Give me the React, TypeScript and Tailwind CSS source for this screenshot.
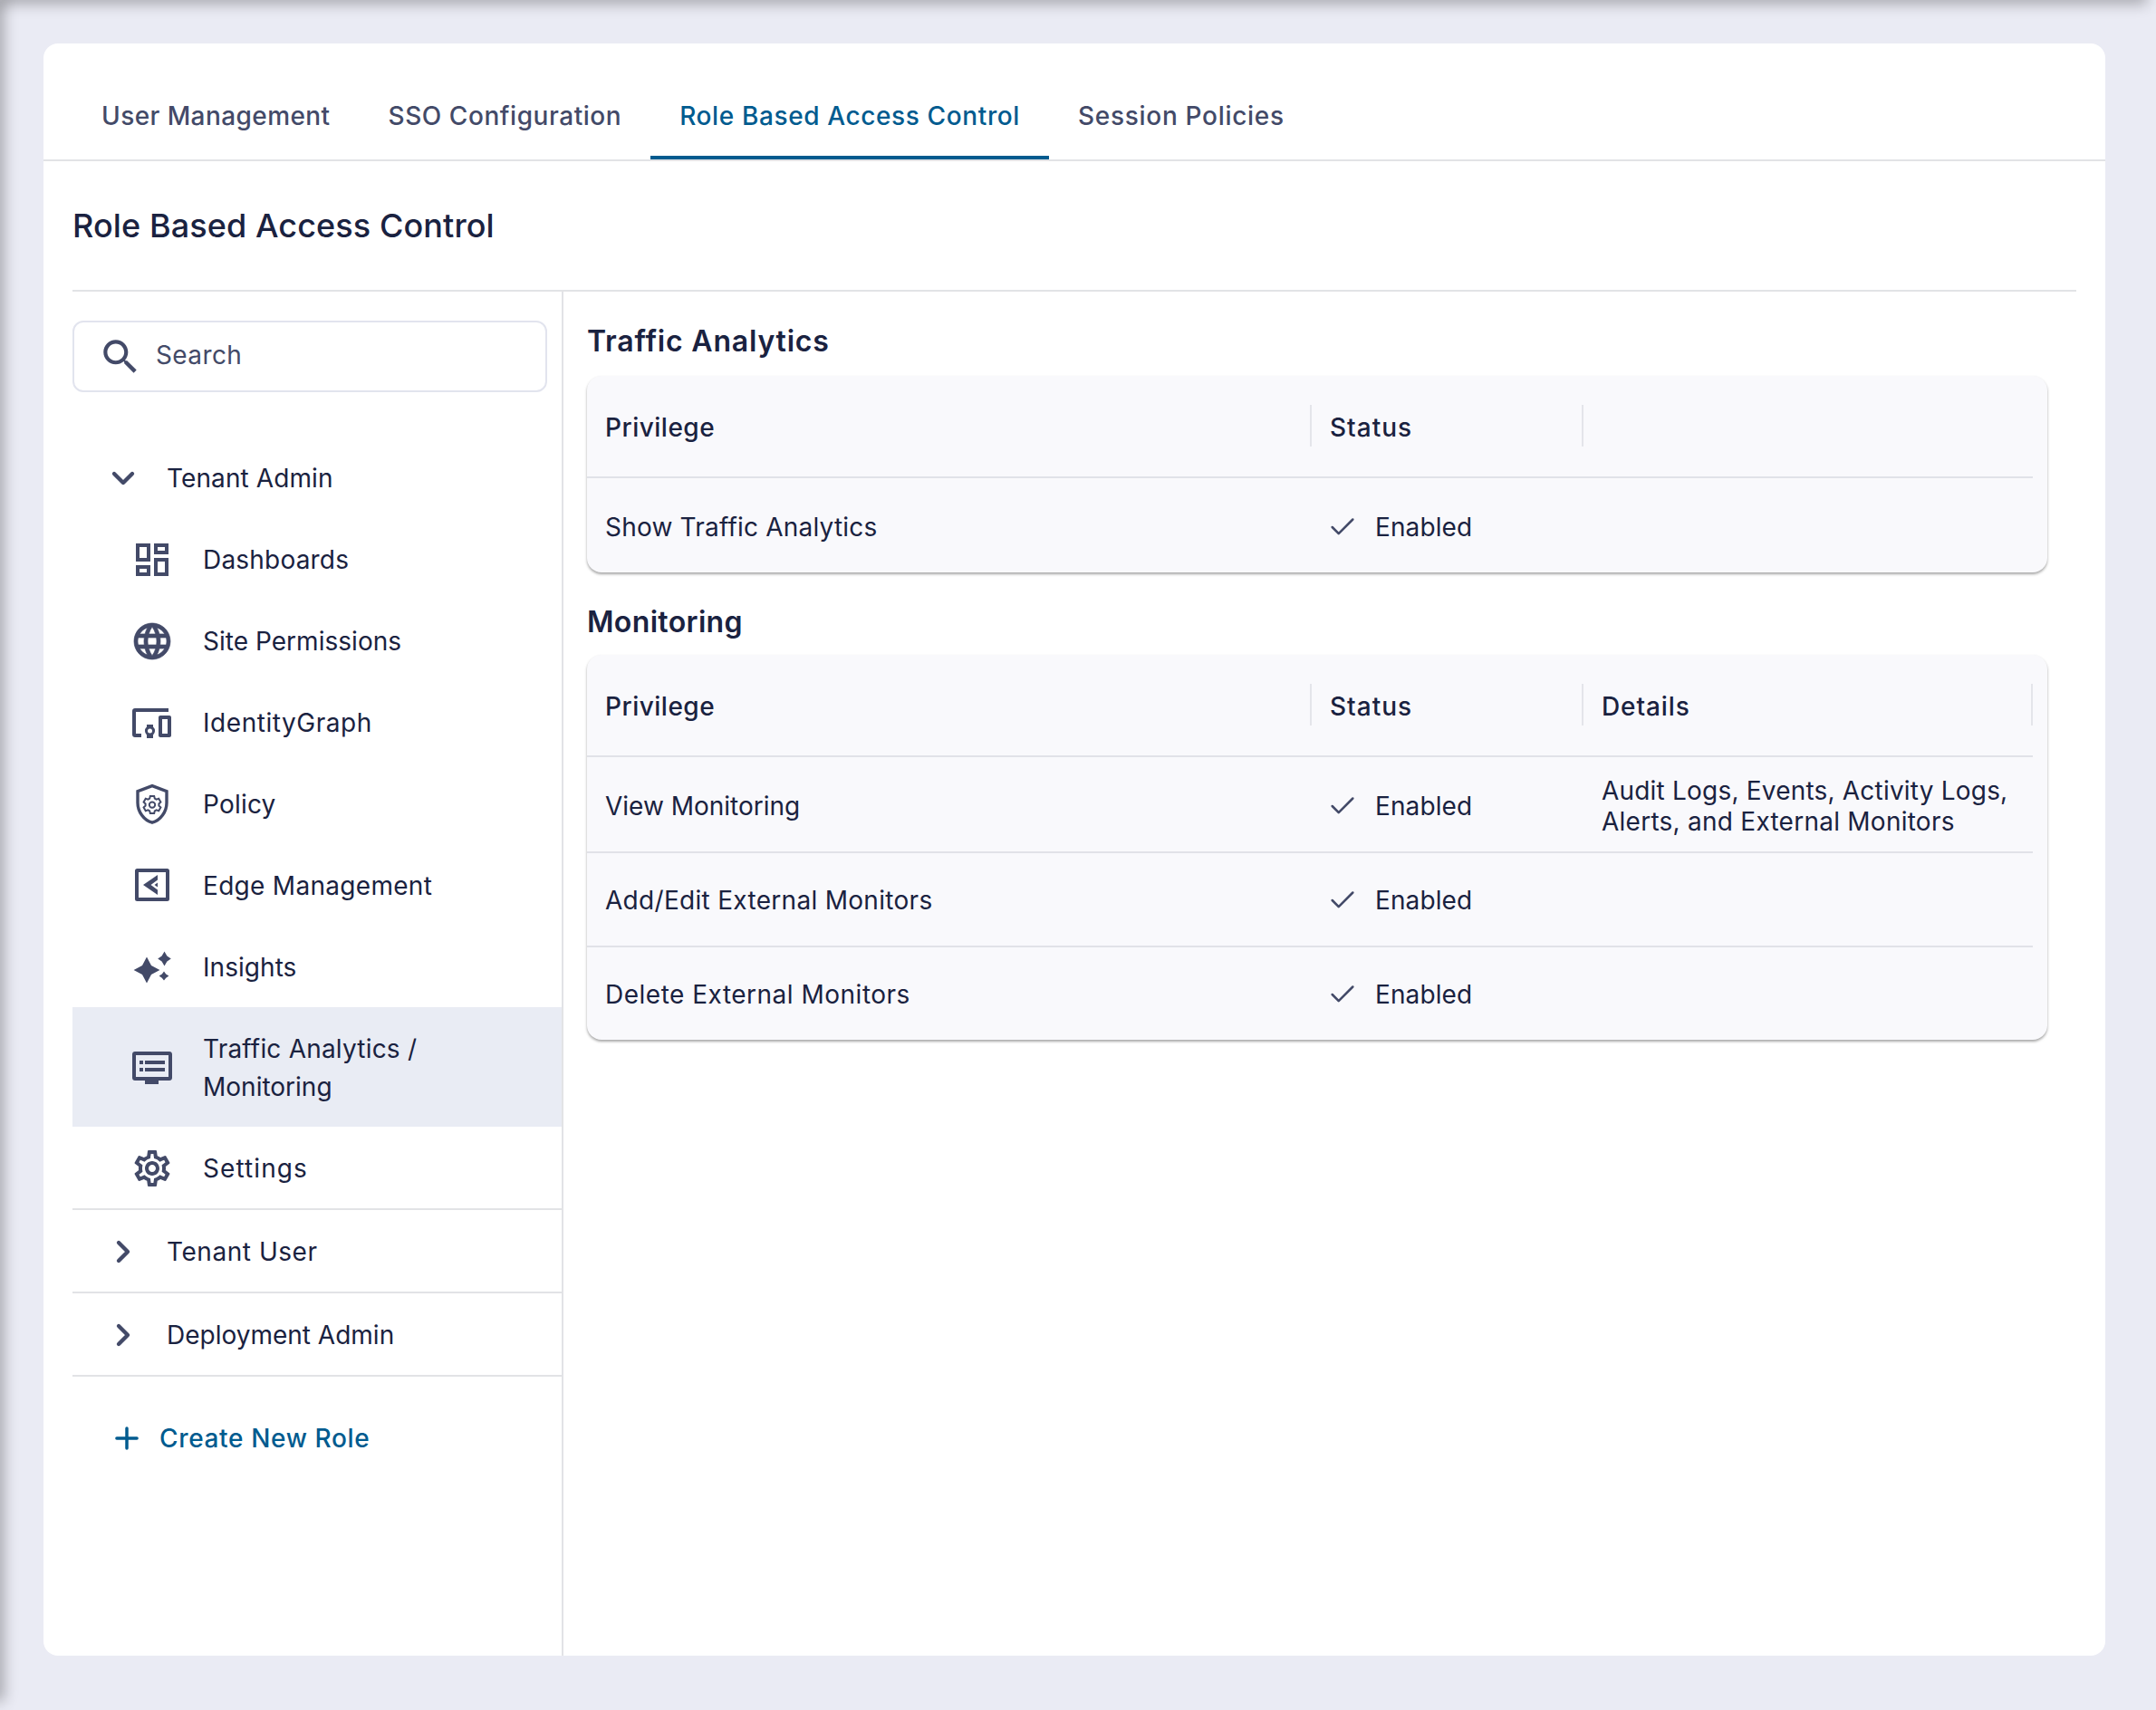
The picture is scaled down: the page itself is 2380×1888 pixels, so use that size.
import React from 'react';
import { Check, ChevronDown, ChevronRight, Plus } from 'lucide-react';

const navIcon = 'shrink-0 text-[#434a68]';

function DashboardIcon() {
  return (
    <svg width="48" height="48" viewBox="0 0 24 24" fill="currentColor" className={navIcon}>
      <path d="M19 5v2h-4V5h4M9 5v6H5V5h4m10 8v6h-4v-6h4M9 17v2H5v-2h4M21 3h-8v6h8V3zM11 3H3v10h8V3zm10 8h-8v10h8V11zm-10 4H3v6h8v-6z" />
    </svg>
  );
}

function GlobeIcon() {
  return (
    <svg width="48" height="48" viewBox="0 0 24 24" fill="currentColor" stroke="currentColor" strokeWidth=".35" className={navIcon}>
      <path d="M11.99 2C6.47 2 2 6.48 2 12s4.47 10 9.99 10C17.52 22 22 17.52 22 12S17.52 2 11.99 2zm6.93 6h-2.95c-.32-1.25-.78-2.45-1.38-3.56 1.84.63 3.37 1.91 4.33 3.56zM12 4.04c.83 1.2 1.48 2.53 1.91 3.96h-3.82c.43-1.43 1.08-2.76 1.91-3.96zM4.26 14C4.1 13.36 4 12.69 4 12s.1-1.36.26-2h3.38c-.08.66-.14 1.32-.14 2s.06 1.34.14 2H4.26zm.82 2h2.95c.32 1.25.78 2.45 1.38 3.56-1.84-.63-3.37-1.9-4.33-3.56zm2.95-8H5.08c.96-1.66 2.49-2.93 4.33-3.56C8.81 5.55 8.35 6.75 8.03 8zM12 19.96c-.83-1.2-1.48-2.53-1.91-3.96h3.82c-.43 1.43-1.08 2.76-1.91 3.96zM14.34 14H9.66c-.09-.66-.16-1.32-.16-2s.07-1.35.16-2h4.68c.09.65.16 1.32.16 2s-.07 1.34-.16 2zm.25 5.56c.6-1.11 1.06-2.31 1.38-3.56h2.95c-.96 1.65-2.49 2.93-4.33 3.56zM16.36 14c.08-.66.14-1.32.14-2s-.06-1.34-.14-2h3.38c.16.64.26 1.31.26 2s-.1 1.36-.26 2h-3.38z" />
    </svg>
  );
}

function IdentityIcon() {
  return (
    <svg width="48" height="48" viewBox="0 0 48 48" fill="currentColor" className={navIcon}>
      <path d="M5 8h37v4H6v24h6v4H5c-1.700 0-3-1.300-3-3V11c0-1.700 1.300-3 3-3z" />
      <path fillRule="evenodd" d="M18 26h7v2.500a6 6 0 0 1 0 9V41h-7v-3.500a6 6 0 0 1 0-9zm3.500 4.500a2.500 2.500 0 1 0 0 5 2.500 2.500 0 0 0 0-5z" />
      <path fillRule="evenodd" d="M33 16h10c1.100 0 2 .9 2 2v20c0 1.100-.9 2-2 2H33c-1.100 0-2-.9-2-2V18c0-1.100.9-2 2-2zm2 4v16h6V20h-6z" />
    </svg>
  );
}

function PolicyIcon() {
  return (
    <svg width="48" height="48" viewBox="0 0 24 24" className={navIcon} fill="none" stroke="currentColor">
      <path strokeWidth="1.700" d="M12 1.800 4 4.800v6.300c0 5 3.400 9.800 8 11 4.600-1.200 8-6 8-11V4.800z" />
      <path strokeWidth="1" d="m10.900 7.500h2.200l.3 1.300.9.500 1.300-.4 1.100 1.900-1 .9v1.100l1 .9-1.100 1.900-1.300-.4-.9.500-.3 1.300h-2.200l-.3-1.300-.9-.5-1.300.4-1.100-1.900 1-.9v-1.100l-1-.9 1.100-1.900 1.300.4.900-.5z" />
      <circle cx="12" cy="12.300" r="1.600" strokeWidth="1" />
    </svg>
  );
}

function EdgeIcon() {
  return (
    <svg width="48" height="48" viewBox="0 0 48 48" className={navIcon} fill="currentColor">
      <path fillRule="evenodd" d="M7.500 5h33A2.500 2.500 0 0 1 43 7.500v31a2.500 2.500 0 0 1-2.500 2.500h-33A2.500 2.500 0 0 1 5 38.500v-31A2.500 2.500 0 0 1 7.500 5zM9 9v28h30V9H9z" />
      <path d="M30 12v5.500L22.500 23l7.500 5.500V34L14 23z" />
      <path d="M30 20.500v5L26.500 23z" />
    </svg>
  );
}

function InsightsIcon() {
  return (
    <svg width="48" height="48" viewBox="0 0 24 24" className={navIcon} fill="currentColor">
      <path d="M9 6.300 11.500 11 16.200 13.500 11.500 16 9 20.700 6.500 16 1.800 13.500 6.500 11z" />
      <path d="M18.750 3.300 20.200 5.800l2.200 1.450-2.200 1.450L18.750 11.200 17.300 8.700l-2.200-1.450 2.200-1.450z" />
      <path d="M18.500 14.300 19.600 15.700l1.600 1.100-1.600 1.100-1.100 1.400-1.100-1.400-1.600-1.100 1.600-1.100z" />
    </svg>
  );
}

function TrafficIcon() {
  return (
    <svg width="48" height="48" viewBox="0 0 48 48" className={navIcon} fill="currentColor">
      <path fillRule="evenodd" d="M5 6h38c1.700 0 3 1.300 3 3v26c0 1.700-1.300 3-3 3H31v4H16v-4H5c-1.700 0-3-1.300-3-3V9c0-1.700 1.300-3 3-3zm1 4v24h36V10H6z" />
      <path d="M10 16h4v4h-4zM16 16h22v4H16zM10 24h4v4h-4zM16 24h22v4H16z" />
    </svg>
  );
}

function SettingsIcon() {
  return (
    <svg width="48" height="48" viewBox="0 0 24 24" className={navIcon} fill="currentColor">
      <path d="M19.430 12.980c.04-.32.07-.64.07-.98 0-.34-.03-.66-.07-.98l2.110-1.650c.19-.15.24-.42.120-.64l-2-3.460c-.09-.16-.26-.25-.44-.25-.06 0-.12.01-.17.03l-2.490 1c-.52-.4-1.080-.73-1.690-.98l-.38-2.650C14.460 2.180 14.250 2 14 2h-4c-.25 0-.46.180-.49.420l-.38 2.650c-.61.250-1.170.590-1.690.980l-2.490-1c-.060-.020-.120-.030-.180-.030-.170 0-.340.090-.430.250l-2 3.460c-.130.220-.070.490.120.640l2.110 1.650c-.040.320-.070.650-.070.980 0 .330.030.660.070.980l-2.110 1.650c-.190.150-.240.420-.120.640l2 3.460c.090.160.260.250.440.250.060 0 .120-.010.170-.030l2.490-1c.520.400 1.080.730 1.690.980l.380 2.650c.030.240.240.420.490.420h4c.250 0 .460-.180.490-.420l.380-2.650c.610-.250 1.170-.590 1.690-.980l2.490 1c.060.020.120.030.180.030.170 0 .340-.090.430-.250l2-3.460c.120-.220.070-.490-.120-.640l-2.110-1.650zm-1.980-1.710c.040.310.050.520.050.730 0 .210-.020.430-.050.730l-.140 1.130.890.700 1.080.840-.700 1.210-1.270-.510-1.040-.420-.900.680c-.430.320-.840.560-1.250.730l-1.060.43-.160 1.130-.200 1.350h-1.400l-.190-1.350-.160-1.130-1.060-.43c-.430-.180-.830-.41-1.230-.71l-.910-.700-1.060.43-1.270.51-.700-1.210 1.080-.84.890-.700-.140-1.130c-.030-.31-.050-.54-.050-.74s.02-.43.05-.73l.14-1.130-.89-.70-1.080-.84.70-1.210 1.270.51 1.040.42.90-.68c.43-.32.84-.56 1.250-.73l1.060-.43.16-1.130.20-1.350h1.390l.19 1.350.16 1.130 1.060.43c.43.18.83.41 1.230.71l.91.70 1.060-.43 1.270-.51.70 1.210-1.070.85-.89.70.14 1.130zM12 8c-2.210 0-4 1.790-4 4s1.790 4 4 4 4-1.790 4-4-1.790-4-4-4zm0 6c-1.100 0-2-.9-2-2s.9-2 2-2 2 .9 2 2-.9 2-2 2z" />
    </svg>
  );
}

const tabs = [
  { label: 'User Management', track: 'tracking-[0.42px]' },
  { label: 'SSO Configuration', track: 'tracking-[0.55px]' },
  { label: 'Role Based Access Control', track: 'tracking-[0.62px]' },
  { label: 'Session Policies', track: 'tracking-[0.7px]' },
];

const navItems: { label: React.ReactNode; icon: React.ReactNode; active?: boolean }[] = [
  { label: <span className="tracking-[0.2px]">Dashboards</span>, icon: <DashboardIcon /> },
  { label: <span className="tracking-[0.03px]">Site Permissions</span>, icon: <GlobeIcon /> },
  { label: <span className="tracking-[0.55px]">IdentityGraph</span>, icon: <IdentityIcon /> },
  { label: <span className="tracking-[0.2px]">Policy</span>, icon: <PolicyIcon /> },
  { label: <span className="tracking-[0.3px]">Edge Management</span>, icon: <EdgeIcon /> },
  { label: <span className="tracking-[0.05px]">Insights</span>, icon: <InsightsIcon /> },
  {
    label: (
      <>
        <span className="tracking-[0.2px]">Traffic Analytics /</span>
        <br />
        <span className="tracking-[0px]">Monitoring</span>
      </>
    ),
    icon: <TrafficIcon />,
    active: true,
  },
  { label: <span className="tracking-[1.1px]">Settings</span>, icon: <SettingsIcon /> },
];

function Sep() {
  return <div className="absolute right-0 top-[32px] h-[46px] w-[2px] bg-[#e4e5ea]" />;
}

function HeaderCell({ className, children }: { className: string; children?: React.ReactNode }) {
  return (
    <div className={`relative flex h-[111px] items-center pl-[20px] pt-[3px] text-[28px] font-medium ${className}`}>
      {children}
    </div>
  );
}

function Row({ name, rowClass, details }: { name: React.ReactNode; rowClass: string; details?: React.ReactNode }) {
  return (
    <div className={`flex items-center border-t-2 border-[#e1e2e8] ${rowClass}`}>
      <div className="w-[800px] pl-[20px]">{name}</div>
      <div className="flex w-[300px] items-center pl-[20px] tracking-[0.1px]">
        <Check size={34} strokeWidth={1.8} className="mr-[19px] -ml-[3px] text-[#434a68]" />
        Enabled
      </div>
      {details && <div className="w-[496px] pl-[20px] leading-[34px]">{details}</div>}
    </div>
  );
}

export default function App() {
  return (
    <div className="relative h-[1888px] w-[2380px] overflow-hidden bg-[#eaebf4] pt-[48px] pr-[56px] pb-[60px] pl-[48px] font-['Inter',sans-serif] text-[28px] tracking-[0.5px] text-[#1a2240]">
      <div className="absolute -top-[10px] left-0 right-[14px] h-[10px] shadow-[0_0_16px_4px_rgba(0,0,0,0.3)]" />
      <div className="absolute -left-[10px] bottom-[14px] top-0 w-[10px] shadow-[0_0_16px_4px_rgba(0,0,0,0.3)]" />

      <div className="flex h-[1780px] flex-col rounded-[16px] bg-white">
        {/* Tabs */}
        <div className="flex h-[130px] items-end border-b-2 border-[#e2e3e6] pl-[32px]">
          {tabs.map((tab, i) => (
            <div
              key={tab.label}
              className={`flex h-[80px] items-center border-b-4 px-[32px] pb-[12px] font-medium ${tab.track} ${
                i === 2 ? 'border-[#005b8f] text-[#005b8f]' : 'border-transparent text-[#434a68]'
              }`}
            >
              {tab.label}
            </div>
          ))}
        </div>

        <div className="flex h-[142px] items-center px-[32px] text-[36px] font-medium tracking-[0.1px]">
          Role Based Access Control
        </div>

        <div className="mx-[32px] flex flex-1 border-t-2 border-[#e2e3e6]">
          {/* Sidebar */}
          <div className="flex w-[542px] flex-col border-r-2 border-[#e2e3e6]">
            <div className="mt-[32px] mr-[16px] flex h-[79px] items-center rounded-[12px] border-2 border-[#e2e4ee] pl-[26px] text-[#434a68]">
              <svg width="50" height="50" viewBox="0 0 24 24" fill="currentColor" className="shrink-0">
                <path d="M15.500 14h-.790l-.280-.270C15.410 12.590 16 11.110 16 9.500 16 5.910 13.090 3 9.500 3S3 5.910 3 9.500 5.910 16 9.500 16c1.610 0 3.090-.590 4.230-1.570l.270.280v.790l5 4.990L20.490 19l-4.990-5zm-6 0C7.010 14 5 11.990 5 9.500S7.010 5 9.500 5 14 7.010 14 9.500 11.990 14 9.500 14z" />
              </svg>
              <span className="ml-[14px] pb-[3px] tracking-[0.4px]">Search</span>
            </div>

            <div className="mt-[49px] flex h-[90px] items-center pt-[2px] pl-[36px]">
              <ChevronDown size={40} strokeWidth={2.6} className="text-[#434a68]" />
              <span className="ml-[28px] tracking-[0.1px]">Tenant Admin</span>
            </div>

            {navItems.map((item, i) => (
              <div
                key={i}
                className={`flex items-center pl-[64px] ${item.active ? 'h-[132px] bg-[#e9ecf4] pt-[2px] leading-[42px]' : 'h-[90px] pt-[2px]'}`}
              >
                <div className="flex w-[48px] justify-center">{item.icon}</div>
                <div className="ml-[32px]">{item.label}</div>
              </div>
            ))}

            <div className="flex h-[92px] items-center border-t-2 border-[#e2e3e6] pt-[2px] pl-[36px]">
              <ChevronRight size={40} strokeWidth={2.6} className="text-[#434a68]" />
              <span className="ml-[28px] tracking-[0.55px]">Tenant User</span>
            </div>
            <div className="flex h-[92px] items-center border-t-2 border-[#e2e3e6] pt-[2px] pl-[36px]">
              <ChevronRight size={40} strokeWidth={2.6} className="text-[#434a68]" />
              <span className="ml-[28px] tracking-[0px]">Deployment Admin</span>
            </div>

            <div className="flex h-[138px] items-center border-t-2 border-[#e2e3e6] pl-[41px] font-medium tracking-[0.65px] text-[#005b8f]">
              <Plus size={38} strokeWidth={2.2} className="text-[#005b8f]" />
              <span className="ml-[17px]">Create New Role</span>
            </div>
          </div>

          {/* Content */}
          <div className="flex-1 pl-[26px]">
            <h2 className="mt-[35px] mb-[18px] text-[32px] leading-[40px] font-semibold tracking-[0.8px]">Traffic Analytics</h2>
            <div className="mr-[32px] rounded-[16px] bg-[#f9f9fc] pr-[16px] shadow-[0_2px_3px_rgba(0,0,0,0.35)]">
              <div className="flex">
                <HeaderCell className="w-[800px]">Privilege<Sep /></HeaderCell>
                <HeaderCell className="w-[300px] tracking-[1px]">Status<Sep /></HeaderCell>
              </div>
              <Row name={<span className="tracking-[0.2px]">Show Traffic Analytics</span>} rowClass="h-[106px] pt-[4px]" />
            </div>

            <h2 className="mt-[35px] mb-[16px] text-[32px] leading-[40px] font-semibold tracking-[0.35px]">Monitoring</h2>
            <div className="mr-[32px] rounded-[16px] bg-[#f9f9fc] pr-[16px] shadow-[0_2px_3px_rgba(0,0,0,0.35)]">
              <div className="flex">
                <HeaderCell className="w-[800px]">Privilege<Sep /></HeaderCell>
                <HeaderCell className="w-[300px] tracking-[1px]">Status<Sep /></HeaderCell>
                <HeaderCell className="w-[496px] tracking-[0.9px]">Details<Sep /></HeaderCell>
              </div>
              <Row
                name={<span className="tracking-[0px]">View Monitoring</span>}
                rowClass="h-[106px] pt-[4px]"
                details={
                  <>
                    <span className="tracking-[0.2px]">Audit Logs, Events, Activity Logs,</span>
                    <br />
                    <span className="tracking-[0.25px]">Alerts, and External Monitors</span>
                  </>
                }
              />
              <Row name={<span className="tracking-[0.3px]">Add/Edit External Monitors</span>} rowClass="h-[104px] pt-[2px]" />
              <Row name="Delete External Monitors" rowClass="h-[104px] pt-[2px]" />
            </div>
          </div>
        </div>
      </div>
    </div>
  );
}
